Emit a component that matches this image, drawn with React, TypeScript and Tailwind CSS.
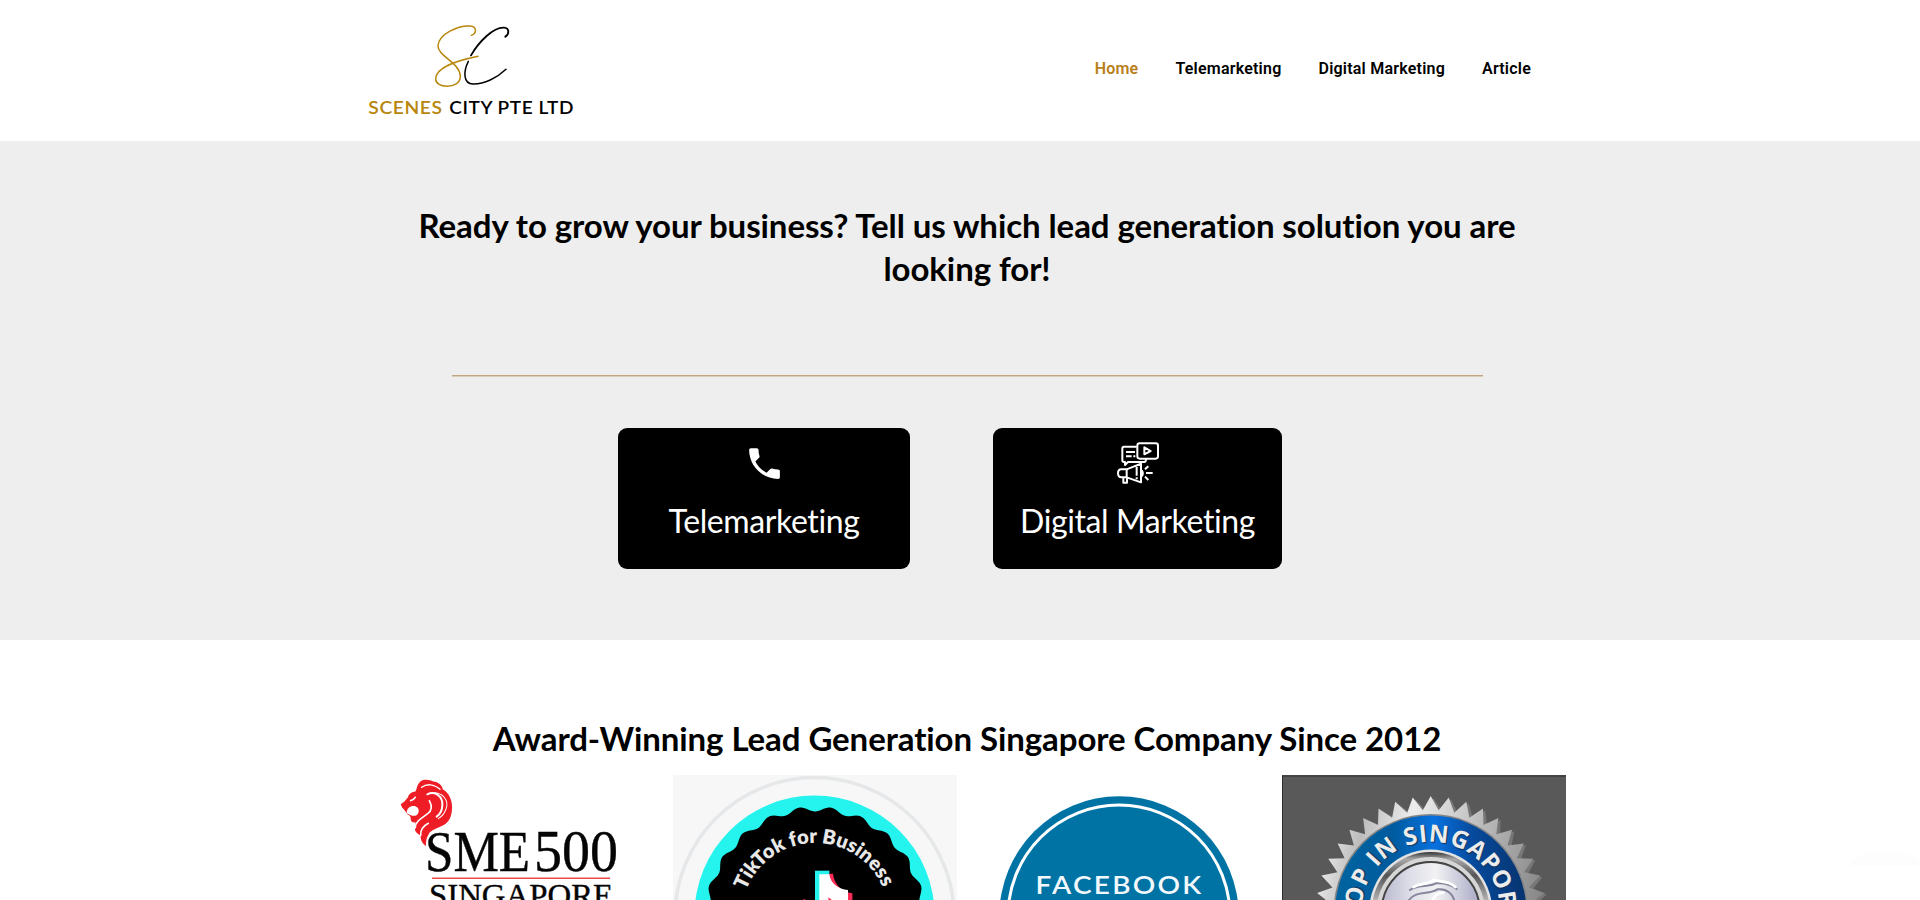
import type { ReactNode } from "react";
import { MdPhone } from "react-icons/md";
import { clsx } from "clsx";

const navItems = ["Home", "Telemarketing", "Digital Marketing", "Article"];

function Logo() {
  return (
    <svg className="h-[100px] w-[206px]" viewBox="54 30 618 300" fill="none">
      <g strokeLinecap="round">
        <path
          d="M364 76C380 70 382 50 360 48C325 46 266 72 264 107C263 139 329 156 331 199C331 220 311 229 291 229C270 229 257 219 257 207C258 172 317 153 384 139"
          stroke="#b8860b"
          strokeWidth="4.5"
        />
        <path d="M466 80C478 73 479 54 462 53C430 51 386 96 363 136" stroke="#000" strokeWidth="5.5" />
        <path d="M355 154C340 184 339 221 369 222C402 223 441 204 468 178" stroke="#000" strokeWidth="4.5" />
      </g>
      <g fontFamily="Lato, sans-serif" fontWeight="600" fontSize="50">
        <text x="55" y="312" fill="#b8860b" letterSpacing="1.5" textLength="223" lengthAdjust="spacingAndGlyphs">
          SCENES
        </text>
        <text x="298" y="312" fill="#000" letterSpacing="1.5" textLength="374" lengthAdjust="spacingAndGlyphs">
          CITY PTE LTD
        </text>
      </g>
    </svg>
  );
}

function Header() {
  return (
    <header className="flex h-[141px] justify-between bg-white pt-5 pr-[389px] pl-[368px]">
      <Logo />
      <nav className="flex gap-[37px] pt-[37px] font-['Roboto',sans-serif] text-base leading-6 font-semibold tracking-[0.22px]">
        {navItems.map((item, i) => (
          <a key={item} className={clsx("whitespace-nowrap", i === 0 ? "text-[#b87f1b]" : "text-black")}>
            {item}
          </a>
        ))}
      </nav>
    </header>
  );
}

function CampaignIcon() {
  return (
    <svg className="h-[42px] w-[42px]" viewBox="441 95 126 126" fill="none" stroke="#fff" strokeWidth="6" strokeLinejoin="round">
      <path d="M500 109H462Q457 109 457 114V149Q457 155 462 155H465V164L474 155H523Q528 155 528 146" />
      <rect x="502" y="99" width="62" height="46" rx="7" />
      <path d="M523 111V132L542 122Z" />
      <path d="M468 125H495M468 138H485M490 138H496" />
      <path d="M470 177H454Q444 177 444 189Q444 201 454 201H470M470 177V201L513 216V160ZM460 202V217H471V202M500 169V196M500 201V207" />
      <path d="M515 180Q522 189 515 198M528 188H548M525 177L535 168M525 199L535 209" />
    </svg>
  );
}

interface ServiceCardProps {
  title: string;
  icon: ReactNode;
  className?: string;
}

function ServiceCard({ title, icon, className }: ServiceCardProps) {
  return (
    <a className={clsx("flex h-[141px] flex-col items-center rounded-[9px] bg-black text-white", className)}>
      <div className="mt-3.5 flex h-[42px] items-center">{icon}</div>
      <span className="mt-[17px] text-[32px] leading-10 tracking-[-0.4px] whitespace-nowrap">{title}</span>
    </a>
  );
}

function SmeBadge() {
  return (
    <svg viewBox="0 0 284 284">
      <g transform="translate(12 -15) scale(.3333)">
        <path
          d="M62 133C72 127 77 121 84 112C86 101 96 97 107 94C111 86 111 73 122 64C134 56 151 60 158 64C176 66 188 78 188 88C207 98 217 121 216 143C216 166 209 185 191 195C176 204 153 208 146 223C139 234 137 247 138 258C127 252 121 239 122 226C115 224 103 215 105 205C105 197 108 190 106 187C99 188 93 186 92 178C93 172 91 166 82 163C77 154 72 147 67 144Z"
          fill="#ee1c25"
        />
        <g fill="none" stroke="#fff" strokeLinecap="round">
          <path d="M80 160C80 145 90 138 100 138C111 138 117 145 116 155C114 166 105 169 96 167Z" fill="#fff" stroke="none" />
          <path d="M92 122Q100 121 106 112" strokeWidth="5" />
          <path d="M125 82C140 71 161 71 180 88" strokeWidth="4" />
          <path d="M142 103C168 91 188 112 187 134C187 153 178 164 170 170" strokeWidth="6" />
          <path d="M151 99C190 94 207 122 198 147C193 162 183 171 175 176" strokeWidth="3" />
          <path d="M148 122C156 137 157 151 143 161C126 174 105 184 106 203" strokeWidth="5" />
          <path d="M145 190C130 198 121 211 122 226" strokeWidth="5" />
        </g>
      </g>
      <g fontFamily="'Liberation Serif', serif" fill="#050505" stroke="#050505" strokeWidth=".4">
        <text x="57" y="96" fontSize="58" textLength="105" lengthAdjust="spacingAndGlyphs">
          SME
        </text>
        <text x="166" y="96" fontSize="60" textLength="84" lengthAdjust="spacingAndGlyphs">
          500
        </text>
        <text x="61" y="131" fontSize="32" textLength="184" lengthAdjust="spacingAndGlyphs">
          SINGAPORE
        </text>
      </g>
      <path d="M64 103.3H242" stroke="#f04a4a" strokeWidth="1.5" />
    </svg>
  );
}

// closed outline whose radius swings between inner and outer
function wavyOutline(cx: number, cy: number, inner: number, outer: number, waves: number) {
  const points: string[] = [];
  for (let i = 0; i < 360; i++) {
    const a = (i * Math.PI) / 180;
    const r = (inner + outer) / 2 - ((outer - inner) / 2) * Math.cos(a * waves);
    points.push(`${(cx + r * Math.sin(a)).toFixed(2)},${(cy - r * Math.cos(a)).toFixed(2)}`);
  }
  return points.join(" ");
}

function starOutline(cx: number, cy: number, inner: number, outer: number, teeth: number) {
  return Array.from({ length: teeth * 2 }, (_, i) => {
    const a = (i * Math.PI) / teeth;
    const r = i % 2 === 0 ? outer : inner;
    return `${(cx + r * Math.sin(a)).toFixed(2)},${(cy - r * Math.cos(a)).toFixed(2)}`;
  }).join(" ");
}

function TikTokBadge() {
  return (
    <svg viewBox="0 0 284 284">
      <rect width="284" height="284" fill="#f7f7f7" />
      <circle cx="141.5" cy="142" r="139.5" fill="none" stroke="#e5e7e9" strokeWidth="3.5" />
      <circle cx="141.5" cy="140.5" r="120" fill="#25f4ee" />
      <polygon points={wavyOutline(142, 142, 105.5, 110.5, 22)} fill="#000" />
      <path id="tiktok-arc" d="M68 142A74 74 0 0 1 216 142" fill="none" />
      <text fontFamily="Lato, sans-serif" fontWeight="800" fontSize="20" fill="#e8e8e8">
        <textPath href="#tiktok-arc" startOffset="27" textLength="175">
          TikTok for Business
        </textPath>
      </text>
      <g transform="translate(-13 -15) scale(.3333)">
        <path d="M465 332H508V430H465Z" fill="#25f4ee" />
        <path d="M506 341H519C522 370 543 396 577 400V430H506Z" fill="#fe2c55" />
        <path d="M478 343H508C511 370 535 388 564 390V430H478Z" fill="#fff" />
        <path d="M505 412L520 423V430H505Z" fill="#fe2c55" />
        <path d="M418 430Q426 417 436 418V430Z" fill="#fe2c55" />
      </g>
    </svg>
  );
}

function FacebookBadge() {
  return (
    <svg viewBox="0 0 284 284">
      <circle cx="142" cy="141" r="119.7" fill="#0073a5" />
      <circle cx="142" cy="141" r="111" fill="none" stroke="#fff" strokeWidth="3" />
      <text
        x="58.5"
        y="118.6"
        fontFamily="Lato, sans-serif"
        fontWeight="600"
        fontSize="24.5"
        fill="#f3f8fc"
        letterSpacing="2"
        textLength="168"
        lengthAdjust="spacingAndGlyphs"
      >
        FACEBOOK
      </text>
    </svg>
  );
}

function TopInSingaporeBadge() {
  return (
    <svg viewBox="0 0 284 284">
      <defs>
        <linearGradient id="silver" x1="0" y1="0.2" x2="1" y2="0.4">
          <stop offset="0" stopColor="#f4f4f4" />
          <stop offset=".18" stopColor="#bdbdbd" />
          <stop offset=".38" stopColor="#ededed" />
          <stop offset=".6" stopColor="#c9c9c9" />
          <stop offset="1" stopColor="#858585" />
        </linearGradient>
        <linearGradient id="enamel">
          <stop offset="0" stopColor="#0064a0" />
          <stop offset=".3" stopColor="#005b9e" />
          <stop offset=".52" stopColor="#0871df" />
          <stop offset=".72" stopColor="#064a9c" />
          <stop offset="1" stopColor="#07336f" />
        </linearGradient>
        <linearGradient id="bezel" x1="0" y1="0" x2="0" y2=".5">
          <stop offset="0" stopColor="#333" />
          <stop offset=".12" stopColor="#aaa" />
          <stop offset=".4" stopColor="#555" />
          <stop offset="1" stopColor="#ddd" />
        </linearGradient>
        <linearGradient id="disc">
          <stop offset="0" stopColor="#b8b9cf" />
          <stop offset=".3" stopColor="#dedfe8" />
          <stop offset=".55" stopColor="#f2f2f4" />
          <stop offset="1" stopColor="#a9aac6" />
        </linearGradient>
      </defs>
      <rect width="284" height="284" fill="#595959" />
      <path d="M.5 284V1H284" fill="none" stroke="#2e2e2e" />
      <polygon points={starOutline(151.2, 137.5, 103, 114.5, 40)} fill="#777" />
      <polygon points={starOutline(148.7, 136, 101, 115, 40)} fill="url(#silver)" />
      <circle cx="148.7" cy="136" r="97" fill="#858585" />
      <circle cx="148.7" cy="136" r="95.5" fill="url(#enamel)" />
      <circle cx="148.7" cy="136" r="61.5" fill="#e3e3e3" />
      <circle cx="148.7" cy="136" r="59" fill="url(#bezel)" />
      <circle cx="148.7" cy="136" r="52" fill="none" stroke="#d6d6d6" strokeWidth="4" />
      <circle cx="148.7" cy="136" r="49" fill="url(#disc)" stroke="#444" strokeWidth="2" />
      <path id="singapore-arc" d="M79.5 136A69.2 69.2 0 0 1 217.9 136V160" fill="none" />
      <text
        className="[text-shadow:1px_1px_1px_#16325a]"
        fontFamily="'Open Sans', sans-serif"
        fontWeight="700"
        fontSize="24"
        fill="#ececec"
      >
        <textPath href="#singapore-arc" startOffset="4" textLength="210">
          OP IN SINGAPOR
        </textPath>
      </text>
      <g transform="translate(-12 -15) scale(.3333)" fill="none" strokeLinecap="round">
        <path d="M420 390C440 374 475 382 498 370C528 368 548 378 560 387M415 422C438 390 477 405 502 388C530 384 550 403 553 424" stroke="#85869b" strokeWidth="6" />
        <path d="M430 381C452 367 472 376 490 360C520 366 540 365 556 381M485 425Q495 399 520 398" stroke="#fff" strokeWidth="8" />
      </g>
    </svg>
  );
}

export default function App() {
  return (
    <div className="relative h-screen overflow-hidden bg-white font-['Lato',sans-serif] text-black [font-variant-ligatures:none]">
      <Header />

      <section className="flex h-[499px] flex-col items-center bg-[#eee] pt-[63px] pl-[14px]">
        <h2 className="w-[1140px] text-center text-[33px] leading-[43px] font-bold tracking-[-0.08px]">
          Ready to grow your business? Tell us which lead generation solution you are looking for!
        </h2>
        <div className="mt-[85px] h-0.5 w-[1031px] border-t border-[#c4a582] bg-[#dccdb9]" />
        <div className="mt-[51px] mr-[34px] flex gap-[83px]">
          <ServiceCard className="w-[292px]" title="Telemarketing" icon={<MdPhone size={41} />} />
          <ServiceCard className="w-[289px]" title="Digital Marketing" icon={<CampaignIcon />} />
        </div>
      </section>

      <section className="flex flex-col items-center pt-[77px] pl-[14px]">
        <h2 className="text-[33px] leading-[43px] font-bold tracking-[-0.08px]">
          Award-Winning Lead Generation Singapore Company Since 2012
        </h2>
        <div className="mt-[15px] grid w-[1198px] grid-cols-4 gap-[20.6px]">
          <SmeBadge />
          <TikTokBadge />
          <FacebookBadge />
          <TopInSingaporeBadge />
        </div>
      </section>

      <div className="absolute top-[852px] right-0 h-[14px] w-[70px] overflow-hidden">
        <div className="h-7 w-[74px] rounded-[50%] bg-[#fdfdfd]" />
      </div>
    </div>
  );
}
